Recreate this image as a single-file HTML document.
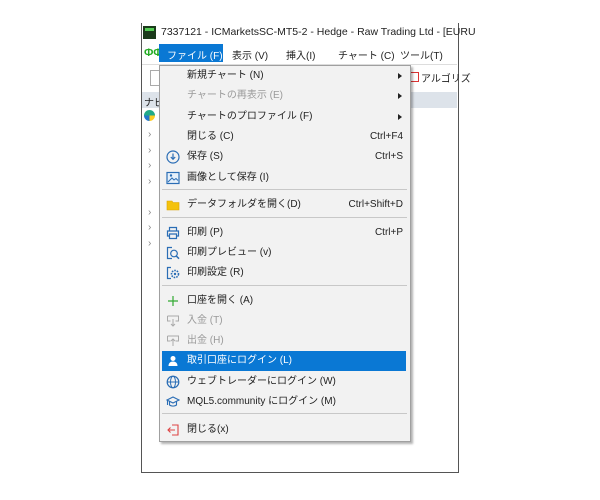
<!DOCTYPE html><html><head><meta charset="utf-8"><style>
body{margin:0;width:600px;height:500px;background:#fff;position:relative;overflow:hidden;font-family:"Liberation Sans","Noto Sans CJK JP",sans-serif;font-size:10px;color:#222}
.a{position:absolute;white-space:nowrap}
.win{position:absolute;left:141px;top:23px;width:316px;height:449px;border:1px solid #555;border-top:none;background:#fff}
.menu{position:absolute;left:159px;top:65px;width:250px;height:375px;background:#f2f2f2;border:1px solid #a0a0a0;box-shadow:2px 2px 2px rgba(0,0,0,.3)}
.it{position:absolute;left:0;width:250px;height:20px;line-height:20px}
.it .t{position:absolute;left:27px}
.it .k{position:absolute;right:7px}
.it .ic{position:absolute;left:6px;top:3px;width:14px;height:14px}
.dis{color:#9a9a9a}
.sep{position:absolute;left:2px;width:245px;height:1px;background:#c8c8c8}
.arr{position:absolute;right:8px;top:7px;width:0;height:0;border-left:4px solid #222;border-top:3px solid transparent;border-bottom:3px solid transparent}
.hl{background:#0a78d4;color:#fff;left:2px;width:244px}
</style></head><body>
<div class="win"></div>
<div class="a" style="left:143px;top:26px;width:13px;height:13px;background:#1a3a1a"></div>
<div class="a" style="left:145px;top:28px;width:9px;height:3px;background:#5c5"></div>
<div class="a" style="left:161px;top:26px;font-size:10.5px">7337121 - ICMarketsSC-MT5-2 - Hedge - Raw Trading Ltd - [EURU</div>
<div class="a" style="left:144px;top:47px;color:#2a2;font-size:11px;font-weight:bold">ФФ</div>
<div class="a" style="left:159px;top:44px;width:64px;height:18px;background:#0a78d4"></div>
<div class="a" style="left:167px;top:47px;color:#fff">ファイル (F)</div>
<div class="a" style="left:232px;top:47px">表示 (V)</div>
<div class="a" style="left:286px;top:47px">挿入(I)</div>
<div class="a" style="left:338px;top:47px">チャート (C)</div>
<div class="a" style="left:400px;top:47px">ツール(T)</div>
<div class="a" style="left:142px;top:64px;width:315px;height:1px;background:#ddd"></div>
<div class="a" style="left:150px;top:70px;width:8px;height:14px;border:1px solid #aaa;border-right:none;background:#fff"></div>
<div class="a" style="left:410px;top:72px;width:7px;height:8px;border:1px solid #d33"></div>
<div class="a" style="left:421px;top:70px">アルゴリズ</div>
<div class="a" style="left:142px;top:92px;width:315px;height:16px;background:#dde3ea"></div>
<div class="a" style="left:144px;top:94px">ナビ</div>
<div class="a" style="left:144px;top:110px;width:11px;height:11px;border-radius:50%;background:conic-gradient(#2a8 0 25%,#fc2 0 50%,#27c 0 75%,#2a8 0)"></div>
<div class="a" style="left:148px;top:127px;color:#888;line-height:15.5px;font-size:10px">›<br>›<br>›<br>›<br><br>›<br>›<br>›</div>
<div class="menu">
<div class="it" style="top:0"><span class="t">新規チャート (N)</span><span class="arr"></span></div>
<div class="it dis" style="top:20px"><span class="t">チャートの再表示 (E)</span><span class="arr"></span></div>
<div class="it" style="top:41px"><span class="t">チャートのプロファイル (F)</span><span class="arr"></span></div>
<div class="it" style="top:61px"><span class="t">閉じる (C)</span><span class="k">Ctrl+F4</span></div>
<div class="it" style="top:81px"><svg class="ic" viewBox="0 0 14 14"><circle cx="7" cy="7" r="6" fill="none" stroke="#2a6db5" stroke-width="1.2"/><path d="M7 3.5V9M4.8 7 7 9.3 9.2 7" fill="none" stroke="#2a6db5" stroke-width="1.2"/></svg><span class="t">保存 (S)</span><span class="k">Ctrl+S</span></div>
<div class="it" style="top:102px"><svg class="ic" viewBox="0 0 14 14"><rect x="1" y="1.5" width="12" height="11" fill="#e6f0fa" stroke="#2a6db5" stroke-width="1.2"/><path d="M2 11 6 7l2 2 2-1.5 2 2" fill="none" stroke="#2a6db5"/><circle cx="5" cy="4.5" r="1.2" fill="#2a6db5"/></svg><span class="t">画像として保存 (I)</span></div>
<div class="sep" style="top:123px"></div>
<div class="it" style="top:129px"><svg class="ic" viewBox="0 0 14 14"><path d="M1 3h5l1 1.5h6V12H1z" fill="#f4c20d" stroke="#d9a400" stroke-width=".6"/></svg><span class="t">データフォルダを開く(D)</span><span class="k">Ctrl+Shift+D</span></div>
<div class="sep" style="top:151px"></div>
<div class="it" style="top:157px"><svg class="ic" viewBox="0 0 14 14"><path d="M3.5 5V1.5h7V5M3.5 10H1.5V5h11v5h-2M3.5 8h7v4.5h-7z" fill="none" stroke="#2a6db5" stroke-width="1.2"/></svg><span class="t">印刷 (P)</span><span class="k">Ctrl+P</span></div>
<div class="it" style="top:177px"><svg class="ic" viewBox="0 0 14 14"><path d="M6 1.5H1.5V12.5H6" fill="none" stroke="#2a6db5" stroke-width="1.2"/><circle cx="8" cy="7.5" r="3.3" fill="none" stroke="#2a6db5" stroke-width="1.2"/><path d="M10.3 10 13 12.7" stroke="#2a6db5" stroke-width="1.5"/></svg><span class="t">印刷プレビュー (v)</span></div>
<div class="it" style="top:197px"><svg class="ic" viewBox="0 0 14 14"><path d="M5 1.5H1.5V12.5H5" fill="none" stroke="#2a6db5" stroke-width="1.2"/><circle cx="9" cy="8" r="3.5" fill="none" stroke="#2a6db5" stroke-width="1.6" stroke-dasharray="1.6 1"/><circle cx="9" cy="8" r="1.2" fill="#2a6db5"/></svg><span class="t">印刷設定 (R)</span></div>
<div class="sep" style="top:219px"></div>
<div class="it" style="top:225px"><svg class="ic" viewBox="0 0 14 14"><path d="M7 2v10M2 7h10" stroke="#3a3" stroke-width="1.2"/></svg><span class="t">口座を開く (A)</span></div>
<div class="it dis" style="top:245px"><svg class="ic" viewBox="0 0 14 14"><path d="M1.5 2h11v5h-3M4.5 7h-3V2M7 5v7M5 10l2 2 2-2" fill="none" stroke="#aaa"/></svg><span class="t">入金 (T)</span></div>
<div class="it dis" style="top:265px"><svg class="ic" viewBox="0 0 14 14"><path d="M1.5 2h11v5h-3M4.5 7h-3V2M7 12V5M5 7l2-2 2 2" fill="none" stroke="#aaa"/></svg><span class="t">出金 (H)</span></div>
<div class="it hl" style="top:285px"><svg class="ic" style="left:4px" viewBox="0 0 14 14"><circle cx="7" cy="4.5" r="2.5" fill="#fff"/><path d="M2.5 12c0-3 2-4.5 4.5-4.5s4.5 1.5 4.5 4.5z" fill="#fff"/></svg><span class="t" style="left:25px">取引口座にログイン (L)</span></div>
<div class="it" style="top:306px"><svg class="ic" viewBox="0 0 14 14"><circle cx="7" cy="7" r="5.8" fill="none" stroke="#2a6db5" stroke-width="1.2"/><ellipse cx="7" cy="7" rx="2.5" ry="5.8" fill="none" stroke="#2a6db5"/><path d="M1.2 7h11.6" stroke="#2a6db5"/></svg><span class="t">ウェブトレーダーにログイン (W)</span></div>
<div class="it" style="top:326px"><svg class="ic" viewBox="0 0 14 14"><path d="M1 5 7 2l6 3-6 3z M3.5 6.5V10c2 1.5 5 1.5 7 0V6.5M1.5 5.5V10" fill="none" stroke="#2a6db5" stroke-width="1.1"/></svg><span class="t">MQL5.community にログイン (M)</span></div>
<div class="sep" style="top:347px"></div>
<div class="it" style="top:354px"><svg class="ic" viewBox="0 0 14 14"><path d="M6 2h6v10H6M9 7H2M4.5 4.5 2 7l2.5 2.5" fill="none" stroke="#d44" stroke-width="1.1"/></svg><span class="t">閉じる(x)</span></div>
</div>
</body></html>
